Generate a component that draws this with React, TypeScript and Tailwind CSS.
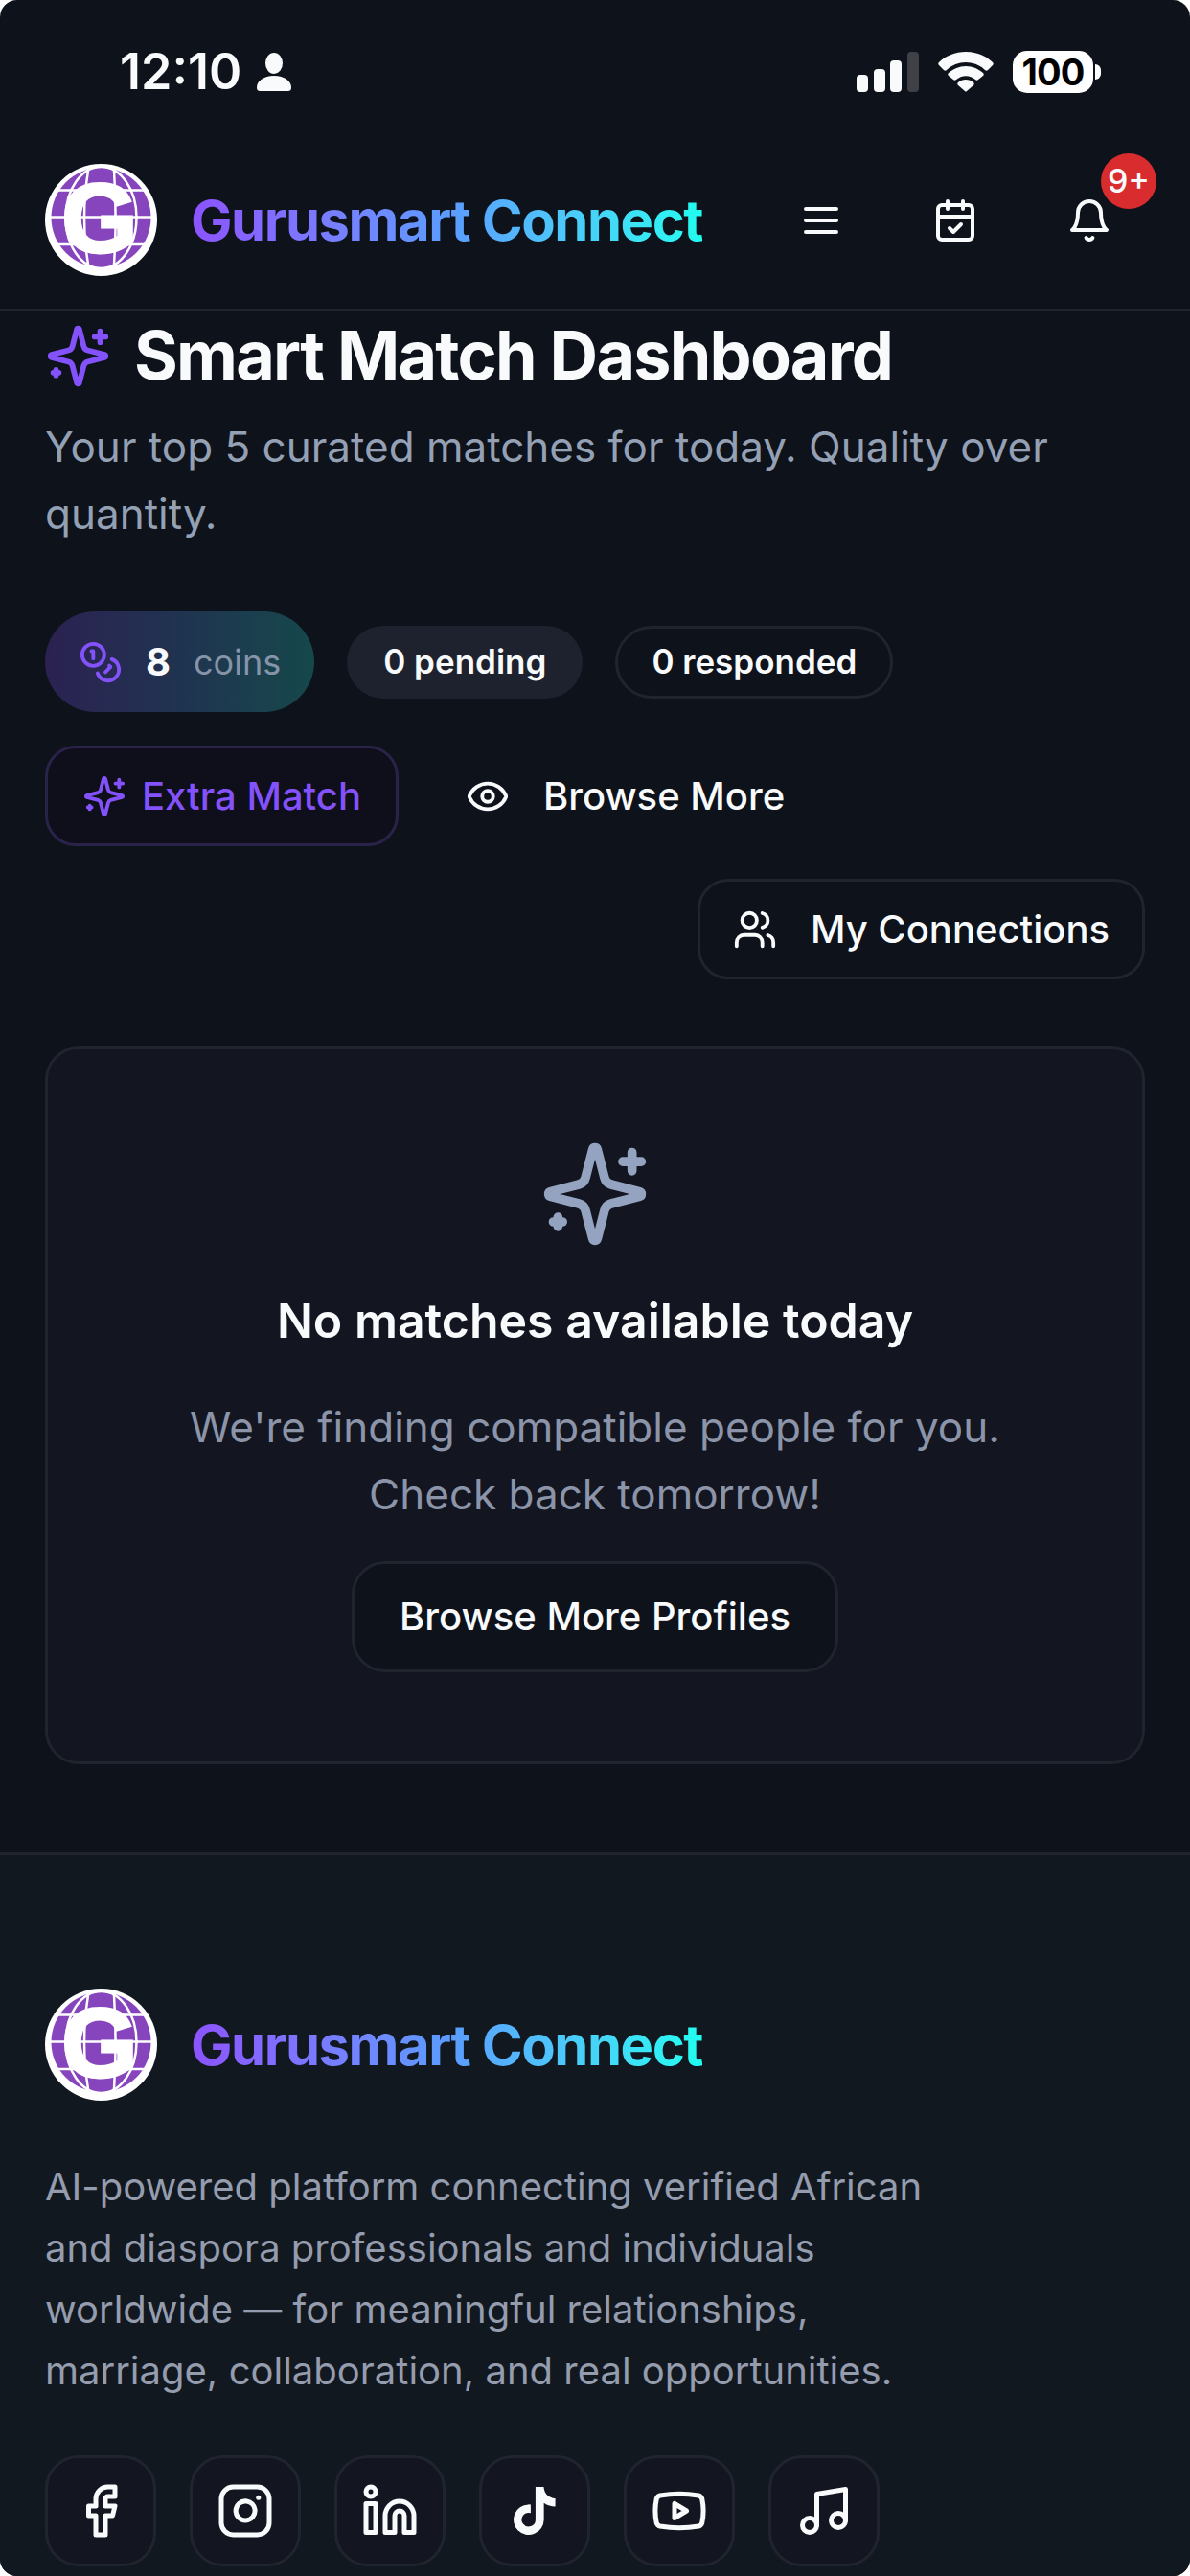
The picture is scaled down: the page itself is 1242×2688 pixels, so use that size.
import type { ReactNode } from "react";
import { Eye, Facebook, Instagram, Linkedin, Music, Users, Youtube } from "lucide-react";

interface IconProps {
  className?: string;
}

const strokeProps = {
  viewBox: "0 0 24 24",
  fill: "none",
  stroke: "currentColor",
  strokeWidth: 2,
  strokeLinecap: "round",
  strokeLinejoin: "round",
} as const;

function MenuIcon({ className }: IconProps) {
  return (
    <svg {...strokeProps} className={className}>
      <path d="M4 6h16M4 12h16M4 18h16" />
    </svg>
  );
}

function SparklesIcon({ className }: IconProps) {
  return (
    <svg {...strokeProps} className={className}>
      <path d="M9.937 15.5A2 2 0 0 0 8.5 14.063l-6.135-1.582a.5.5 0 0 1 0-.962L8.5 9.936A2 2 0 0 0 9.937 8.5l1.582-6.135a.5.5 0 0 1 .963 0L14.063 8.5A2 2 0 0 0 15.5 9.937l6.135 1.581a.5.5 0 0 1 0 .964L15.5 14.063a2 2 0 0 0-1.437 1.437l-1.582 6.135a.5.5 0 0 1-.963 0z" />
      <path d="M20 3v4M22 5h-4M4 17v2M5 18H3" />
    </svg>
  );
}

function CalendarCheckIcon({ className }: IconProps) {
  return (
    <svg {...strokeProps} className={className}>
      <path d="M8 2v4M16 2v4" />
      <rect width="18" height="18" x="3" y="4" rx="2" />
      <path d="M3 10h18M9 16l2 2 4-4" />
    </svg>
  );
}

function BellIcon({ className }: IconProps) {
  return (
    <svg {...strokeProps} className={className}>
      <path d="M6 8a6 6 0 0 1 12 0c0 7 3 9 3 9H3s3-2 3-9" />
      <path d="M10.3 21a1.94 1.94 0 0 0 3.4 0" />
    </svg>
  );
}

function CoinsIcon({ className }: IconProps) {
  return (
    <svg {...strokeProps} className={className}>
      <circle cx="8" cy="8" r="6" />
      <path d="M18.09 10.37A6 6 0 1 1 10.34 18" />
      <path d="M7 6h1v4" />
      <path d="m16.71 13.88.7.71-2.82 2.82" />
    </svg>
  );
}

function TikTokIcon({ className }: IconProps) {
  return (
    <svg viewBox="0 0 24 24" fill="currentColor" className={className}>
      <path d="M19.59 6.69a4.83 4.83 0 0 1-3.77-4.25V2h-3.45v13.67a2.89 2.89 0 0 1-5.2 1.74 2.89 2.89 0 0 1 2.31-4.64 2.93 2.93 0 0 1 .88.13V9.4a6.84 6.84 0 0 0-1-.05A6.33 6.33 0 0 0 5 20.1a6.34 6.34 0 0 0 10.86-4.43v-7a8.16 8.16 0 0 0 4.77 1.52v-3.4a4.85 4.85 0 0 1-1-.1z" />
    </svg>
  );
}

function GlobeLogo() {
  return (
    <svg viewBox="0 0 117 117" className="size-[117px] shrink-0 overflow-visible" aria-hidden="true">
      <circle cx="58.5" cy="58.5" r="58.5" fill="#fff" />
      <circle cx="58.5" cy="56" r="52" fill="#8644bd" />
      <g fill="none" stroke="#fff" strokeWidth="2.5">
        <ellipse cx="58.5" cy="56" rx="37" ry="53" />
        <path d="M12 27.500H105M5 55.500H112M10 84H107" />
        <path d="M45 7C40 38 40 74 45 105M72 7C74 38 74 74 72 105" />
      </g>
      <text
        x="57"
        y="92"
        textAnchor="middle"
        fontSize="102"
        fontWeight="700"
        fill="#fff"
        stroke="#fff"
        strokeWidth="3"
        className="font-['Liberation_Sans',sans-serif]"
      >
        G
      </text>
    </svg>
  );
}

function Brand() {
  return (
    <a href="#" className="flex items-center gap-[35px]">
      <GlobeLogo />
      <span className="bg-linear-to-r from-[#8b52ff] via-[#5b9bff] to-[#1ffcf0] bg-clip-text text-[58px] leading-[80px] font-bold tracking-tight whitespace-nowrap text-transparent">
        Gurusmart Connect
      </span>
    </a>
  );
}

function StatusBar() {
  return (
    <div className="flex h-[150px] items-center justify-between pr-[93px] pl-[125px]">
      <div className="flex items-center gap-4">
        <span className="text-[52px] leading-none font-semibold">12:10</span>
        <svg viewBox="0 0 36 40" className="h-10 w-9" fill="currentColor">
          <ellipse cx="18" cy="11" rx="9" ry="11" />
          <path d="M18 24c11 0 18 6 18 12 0 3-1 4-4 4H4c-3 0-4-1-4-4 0-6 7-12 18-12z" />
        </svg>
      </div>
      <div className="flex items-center gap-5">
        <svg viewBox="0 0 65 42" className="h-[42px] w-[65px]" fill="currentColor">
          <rect x="0" y="24" width="12" height="18" rx="4" />
          <rect x="18" y="18" width="12" height="24" rx="4" />
          <rect x="35" y="9" width="12" height="33" rx="4" />
          <rect x="53" y="0" width="12" height="42" rx="4" fill="#3f4147" />
        </svg>
        <svg viewBox="0 0 58 42" className="h-[42px] w-[58px]" fill="currentColor">
          <path d="M29 0c11 0 21 4 28 11 1 1 1 2 0 3l-5 5c-1 1-2 1-3 0a29 29 0 0 0-40 0c-1 1-2 1-3 0l-5-5c-1-1-1-2 0-3C8 4 18 0 29 0z" />
          <path d="M29 15c7 0 13 3 18 7 1 1 1 2 0 3l-5 4c-1 1-2 1-3 0a15 15 0 0 0-20 0c-1 1-2 1-3 0l-5-4c-1-1-1-2 0-3 5-4 11-7 18-7z" />
          <path d="M29 29c3 0 6 1 8 3 1 1 1 2 0 3l-7 6c-1 1-1 1-2 0l-7-6c-1-1-1-2 0-3 2-2 5-3 8-3z" />
        </svg>
        <div className="flex items-center gap-[2px]">
          <span className="flex h-11 w-[84px] items-center justify-center rounded-[15px] bg-white text-[38px] leading-none font-bold tracking-tight text-black">
            100
          </span>
          <span className="h-4 w-[6px] rounded-r-full bg-white" />
        </div>
      </div>
    </div>
  );
}

function HeaderButton({ label, children }: { label: string; children: ReactNode }) {
  return (
    <button type="button" aria-label={label} className="relative flex size-[116px] items-center justify-center">
      {children}
    </button>
  );
}

const socials = [
  { name: "Facebook", icon: <Facebook className="size-[60px]" /> },
  { name: "Instagram", icon: <Instagram className="size-[60px]" /> },
  { name: "LinkedIn", icon: <Linkedin className="size-[60px]" /> },
  { name: "TikTok", icon: <TikTokIcon className="size-[60px]" /> },
  { name: "YouTube", icon: <Youtube className="size-[60px]" /> },
  { name: "Music", icon: <Music className="size-[60px]" /> },
];

export default function App() {
  return (
    <div className="min-h-screen bg-white font-[Inter,sans-serif]">
      <div className="flex min-h-screen flex-col overflow-hidden rounded-[18px] bg-[#0e121b] text-[#f8fafc]">
        <StatusBar />

        <header className="flex items-center justify-between border-b-3 border-[#20242e] px-[47px] pt-[21px] pb-[34px]">
          <Brand />
          <nav className="flex items-center gap-6">
            <HeaderButton label="Menu">
              <MenuIcon className="size-12" />
            </HeaderButton>
            <HeaderButton label="Calendar">
              <CalendarCheckIcon className="size-12" />
            </HeaderButton>
            <HeaderButton label="Notifications">
              <BellIcon className="size-12" />
              <span className="absolute -top-3 -right-3 flex size-[58px] items-center justify-center rounded-full bg-[#d92c2f] text-[34px] font-medium">
                9+
              </span>
            </HeaderButton>
          </nav>
        </header>

        <main className="px-[47px] pb-[92px]">
          <h1 className="flex items-center gap-6 text-[70px] leading-[92px] font-bold tracking-tight">
            <SparklesIcon className="size-[69px] shrink-0 text-[#8452fa]" />
            Smart Match Dashboard
          </h1>
          <p className="mt-[14px] text-[44px] leading-[70px] text-[#94a0b4]">
            Your top 5 curated matches for today. Quality over quantity.
          </p>

          <div className="mt-[67px] flex flex-wrap items-center gap-x-[34px] gap-y-9">
            <div className="flex h-[105px] items-center gap-6 rounded-full bg-linear-to-r from-[#2b2152] via-[#1f3350] to-[#15484b] px-[35px]">
              <CoinsIcon className="size-[46px] text-[#8452fa]" />
              <span className="text-[40px] font-bold">8</span>
              <span className="text-[36px] text-[#8693a8]">coins</span>
            </div>
            <span className="flex h-[76px] items-center rounded-full bg-[#1e222e] px-[38px] text-[35px] font-semibold">
              0 pending
            </span>
            <span className="flex h-[76px] items-center rounded-full border-3 border-[#20242e] px-[35px] text-[35px] font-semibold">
              0 responded
            </span>
          </div>

          <div className="mt-[35px] flex flex-wrap items-center gap-x-9">
            <button
              type="button"
              className="flex h-[105px] items-center gap-4 rounded-[32px] border-3 border-[#2a2349] bg-[#0f0f1b] px-9 text-[40px] font-medium text-[#8452fa]"
            >
              <SparklesIcon className="size-[46px]" />
              Extra Match
            </button>
            <button type="button" className="flex h-[105px] items-center gap-[35px] px-[34px] text-[40px] font-medium">
              <Eye className="size-[46px]" />
              Browse More
            </button>
          </div>

          <div className="mt-[34px] flex justify-end">
            <button
              type="button"
              className="flex h-[105px] items-center gap-[35px] rounded-[32px] border-3 border-[#20242e] px-[34px] text-[40px] font-medium"
            >
              <Users className="size-[46px]" />
              My Connections
            </button>
          </div>

          <section className="mt-[70px] flex flex-col items-center rounded-[35px] border-3 border-[#20242e] bg-[#131620] px-[100px] py-[93px] text-center">
            <SparklesIcon className="size-[116px] text-[#94a3bf]" />
            <h2 className="mt-[34px] text-[50px] leading-[80px] font-semibold">No matches available today</h2>
            <p className="mt-9 text-[44px] leading-[70px] text-[#8b94a8]">
              We're finding compatible people for you.
              <br />
              Check back tomorrow!
            </p>
            <button
              type="button"
              className="mt-[35px] h-[116px] rounded-[35px] border-3 border-[#20242e] bg-[#0e121b] px-[47px] text-[40px] font-medium"
            >
              Browse More Profiles
            </button>
          </section>
        </main>

        <footer className="flex-1 border-t-3 border-[#20242e] bg-[#121820] px-[47px] pt-[139px] pb-1">
          <Brand />
          <p className="mt-[58px] max-w-[930px] text-[40px] leading-[64px] text-[#949cae]">
            AI-powered platform connecting verified African and diaspora professionals and individuals worldwide — for
            meaningful relationships, marriage, collaboration, and real opportunities.
          </p>
          <ul className="mt-[56px] flex gap-[35px]">
            {socials.map((social) => (
              <li key={social.name}>
                <a
                  href="#"
                  aria-label={social.name}
                  className="flex size-[116px] items-center justify-center rounded-[35px] border-3 border-[#20242e] bg-[#131620]"
                >
                  {social.icon}
                </a>
              </li>
            ))}
          </ul>
        </footer>
      </div>
    </div>
  );
}
